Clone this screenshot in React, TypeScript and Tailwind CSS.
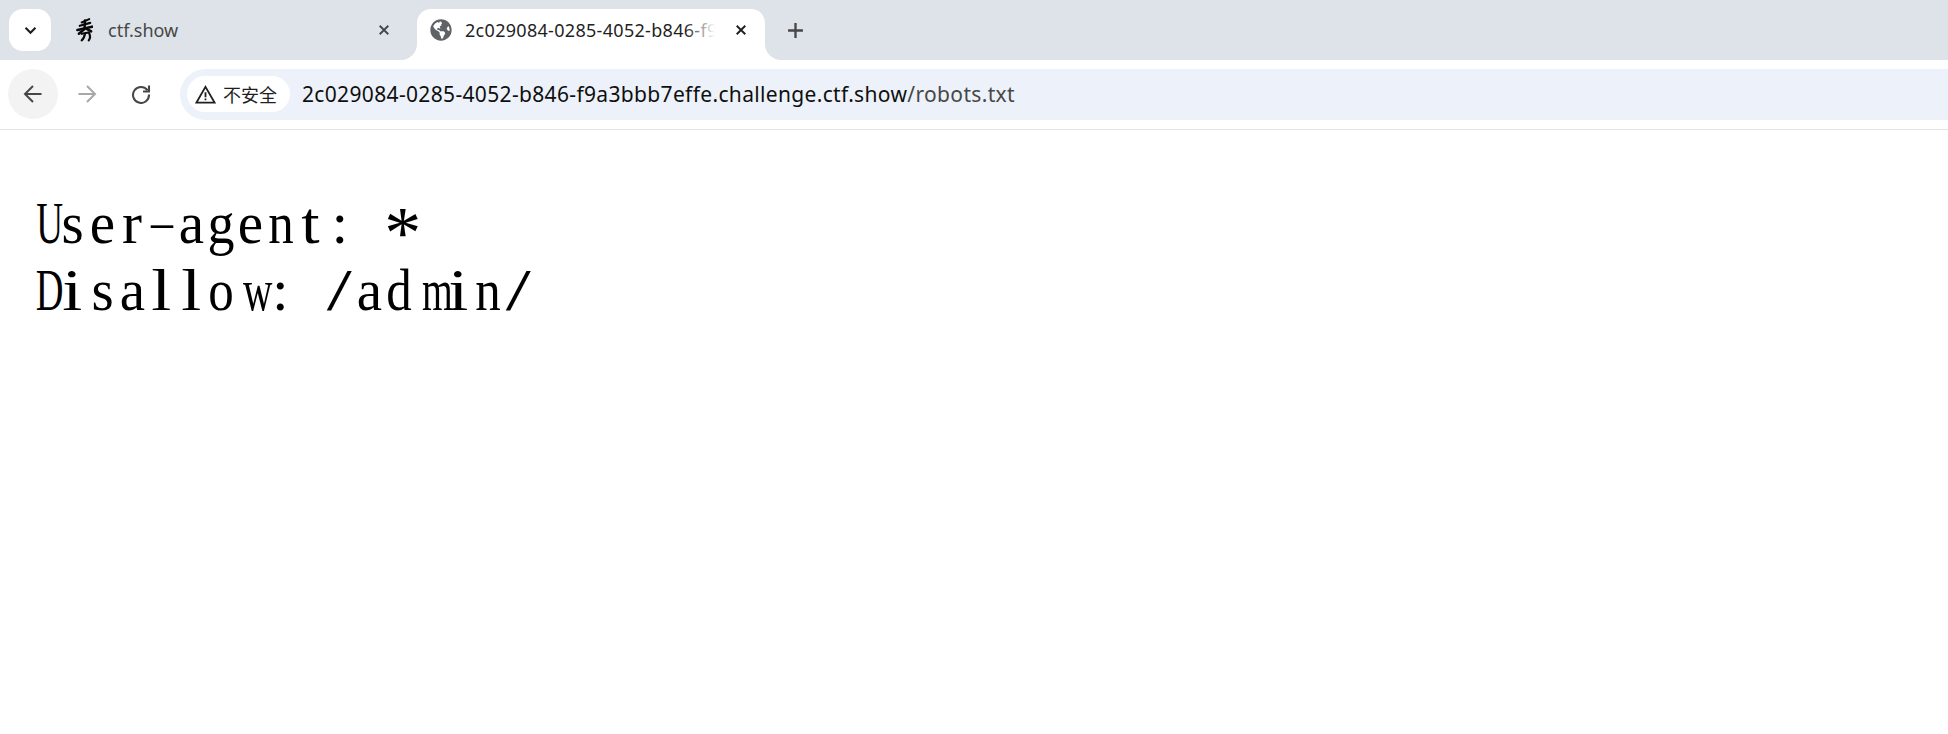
import { FaGlobeAmericas } from "react-icons/fa";

const ui = "font-['Noto_Sans','Noto_Sans_CJK_SC',sans-serif]";

function Close({ className }: { className: string }) {
  return (
    <svg viewBox="0 0 14 14" className={className} fill="none" stroke="currentColor" strokeWidth="2.2">
      <path d="M2 2 L12 12 M12 2 L2 12" />
    </svg>
  );
}

function Favicon() {
  return (
    <svg viewBox="0 0 18 26" className="h-[26px] w-[17px] shrink-0" fill="none" stroke="#0a0a0a" strokeLinecap="round">
      <path d="M6 5 L14 1.5" strokeWidth="2.2" />
      <path d="M4 8.5 L15 5.5" strokeWidth="2.4" />
      <path d="M1.5 13 L17 9.5" strokeWidth="2.8" />
      <path d="M9.5 3 L9 12 L3 17" strokeWidth="2.6" />
      <path d="M10 11 L16 14.5" strokeWidth="2.8" />
      <path d="M6 17 L13.5 15.5 C15.5 19 15 22 13.5 24" strokeWidth="2.3" />
      <path d="M9.5 17 C9 20 8 22.5 6 24" strokeWidth="2.3" />
    </svg>
  );
}

const glyph: Record<string, string> = {
  "-": "inline-block scale-x-[1.45] scale-y-[0.6]",
  "*": "inline-block translate-y-[15px] text-[74px] leading-[0]",
  i: "inline-block scale-x-[1.2]",
  l: "inline-block scale-x-[1.2]",
  ":": "inline-block",
  "/": "inline-block scale-x-[1.5]",
  r: "inline-block",
  t: "inline-block scale-x-[1.1]",
  s: "inline-block scale-x-[0.95]",
  e: "inline-block scale-x-[0.95]",
  a: "inline-block scale-x-[0.95]",
  g: "inline-block scale-x-[0.9]",
  n: "inline-block scale-x-[0.85]",
  d: "inline-block scale-x-[0.85]",
  o: "inline-block scale-x-[0.85]",
  m: "inline-block scale-x-[0.66]",
  w: "inline-block scale-x-[0.68]",
  U: "inline-block scale-x-[0.62]",
  D: "inline-block scale-x-[0.64]",
};

function Line({ text }: { text: string }) {
  return (
    <div className="flex h-[67px] items-baseline font-['Liberation_Serif',serif] text-[60px] leading-[67px] text-black">
      {text.split("").map((c, i) => (
        <span key={i} className="inline-block w-[29.7px] text-center whitespace-pre">
          <span className={glyph[c] ?? ""}>{c}</span>
        </span>
      ))}
    </div>
  );
}

export default function App() {
  return (
    <div className={`flex h-[734px] w-[1948px] flex-col overflow-hidden bg-white ${ui}`}>
      {/* Tab strip */}
      <div className="flex h-[60px] shrink-0 items-end bg-[#dee3ea] pl-[9px]">
        <div className="mb-[9px] flex h-[42px] w-[42px] shrink-0 items-center justify-center rounded-[14px] bg-white text-[#1f1f1f]">
          <svg viewBox="0 0 14 10" className="h-[9px] w-[13px]" fill="none" stroke="currentColor" strokeWidth="2.4">
            <path d="M1.5 2 L7 7.5 L12.5 2" />
          </svg>
        </div>
        <div className="flex h-[51px] w-[366px] shrink-0 items-center pb-[9px] pl-[25px] pr-[27px]">
          <Favicon />
          <span className="ml-[15px] flex-1 text-[18px] leading-none text-[#474747]">ctf.show</span>
          <Close className="h-[12px] w-[12px] text-[#474747]" />
        </div>
        <div className="relative flex h-[51px] w-[348px] shrink-0 items-center rounded-t-[14px] bg-white pb-[9px] pl-[13px] pr-[18px]">
          <span className="absolute -left-[16px] bottom-0 h-[16px] w-[16px] bg-white">
            <span className="block h-full w-full rounded-br-[16px] bg-[#dee3ea]" />
          </span>
          <span className="absolute -right-[16px] bottom-0 h-[16px] w-[16px] bg-white">
            <span className="block h-full w-full rounded-bl-[16px] bg-[#dee3ea]" />
          </span>
          <FaGlobeAmericas className="h-[22px] w-[22px] shrink-0 text-[#5f6368]" />
          <span className="relative ml-[13px] w-[250px] overflow-hidden whitespace-nowrap text-[18px] leading-[22px] tracking-[0.3px] text-[#1f1f1f]">
            2c029084-0285-4052-b846-f9a3bbb7effe.challenge.ctf.show/robots.txt
            <span className="absolute inset-y-0 right-0 w-[30px] bg-gradient-to-r from-transparent to-white" />
          </span>
          <Close className="ml-auto h-[12px] w-[12px] text-[#1f1f1f]" />
        </div>
        <div className="mb-[9px] ml-[21px] flex h-[42px] w-[18px] items-center justify-center text-[#474747]">
          <svg viewBox="0 0 16 16" className="h-[17px] w-[17px]" fill="none" stroke="currentColor" strokeWidth="2.2">
            <path d="M8 1 V15 M1 8 H15" />
          </svg>
        </div>
      </div>

      {/* Toolbar */}
      <div className="flex h-[70px] shrink-0 items-center border-b border-[#e1e3e6] pb-[1px] pl-[8px]">
        <div className="flex h-[50px] w-[50px] items-center justify-center rounded-full bg-[#f3f3f3] text-[#474747]">
          <svg viewBox="0 0 20 20" className="h-[20px] w-[20px]" fill="none" stroke="currentColor" strokeWidth="2">
            <path d="M18.5 10 H2 M10 2 L2 10 L10 18" />
          </svg>
        </div>
        <div className="ml-[4px] flex h-[50px] w-[50px] items-center justify-center text-[#a8a8a8]">
          <svg viewBox="0 0 20 20" className="h-[20px] w-[20px]" fill="none" stroke="currentColor" strokeWidth="2">
            <path d="M1.5 10 H18 M10 2 L18 10 L10 18" />
          </svg>
        </div>
        <div className="ml-[4px] flex h-[50px] w-[50px] items-center justify-center text-[#474747]">
          <svg viewBox="0 0 20 20" className="h-[20px] w-[20px]" fill="none" stroke="currentColor" strokeWidth="2.1">
            <path d="M16.6 6.4 A8 8 0 1 0 18 10.5" />
            <path d="M18 1.5 V7.5 H12" />
          </svg>
        </div>
        <div className="ml-[14px] flex h-[51px] flex-1 items-center rounded-l-full bg-[#edf2fa] pl-[7px]">
          <div className="flex h-[36px] w-[103px] shrink-0 items-center rounded-full bg-white pl-[8px]">
            <svg viewBox="0 0 22 20" className="h-[19px] w-[21px] shrink-0 text-[#1f1f1f]" fill="none" stroke="currentColor">
              <path d="M11 2 L20.5 18.5 H1.5 Z" strokeWidth="1.9" />
              <path d="M11 7.5 V13 M11 14.2 V16" strokeWidth="1.9" />
            </svg>
            <span className="ml-[7px] font-['Noto_Sans_CJK_SC',sans-serif] text-[18px] leading-none text-[#1f1f1f]">不安全</span>
          </div>
          <div className="ml-[12px] whitespace-nowrap text-[21px] leading-none tracking-[0.34px] text-[#0f0f0f]">
            2c029084-0285-4052-b846-f9a3bbb7effe.challenge.ctf.show<span className="text-[#474747]">/robots.txt</span>
          </div>
        </div>
      </div>

      {/* Page */}
      <div className="flex-1 bg-white pl-[28px] pt-[60px]">
        <Line text="User-agent: *" />
        <Line text="Disallow: /admin/" />
      </div>
    </div>
  );
}
